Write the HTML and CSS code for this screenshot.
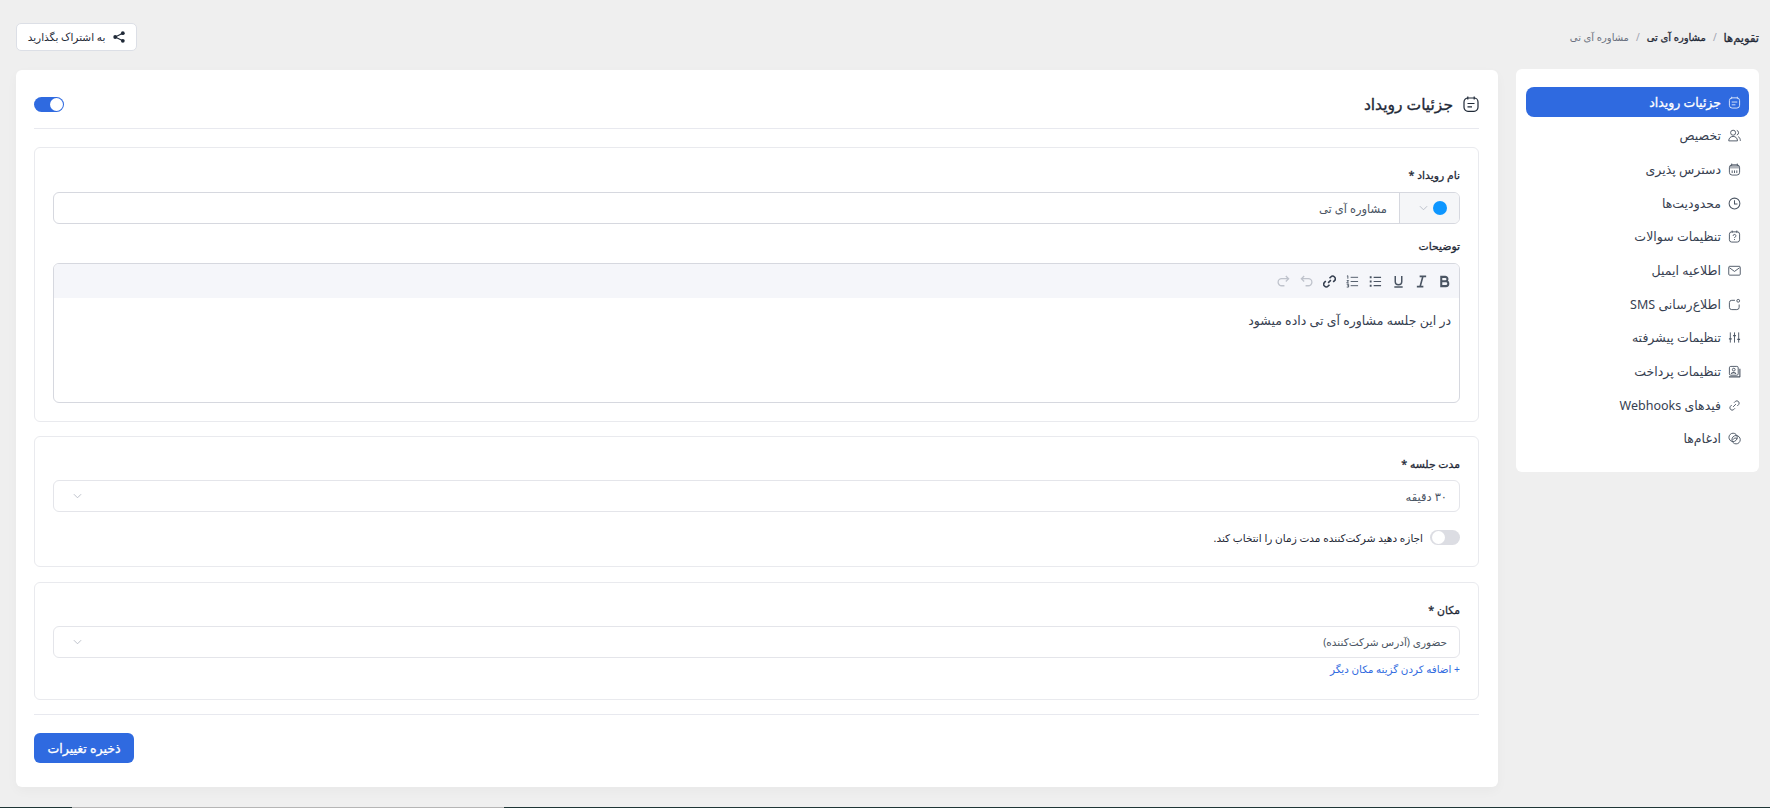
FILE: index.html
```html
<!DOCTYPE html>
<html lang="fa" dir="rtl">
<head>
<meta charset="utf-8">
<title>جزئیات رویداد</title>
<link rel="stylesheet" href="styles.css">
</head>
<body>
<div class="page">
  <header class="topbar">
    <nav class="crumbs">
      <a class="crumb strong first">تقویم‌ها</a><span class="sep">/</span>
      <a class="crumb strong">مشاوره آی تی</a><span class="sep">/</span>
      <span class="crumb muted">مشاوره آی تی</span>
    </nav>
    <button class="share">
      <svg class="ic-share" viewBox="0 0 12 12" fill="#1f2937"><circle cx="9.800" cy="2.200" r="1.900"/><circle cx="2.200" cy="6" r="1.900"/><circle cx="9.800" cy="9.800" r="1.900"/><path d="M2.200 6l7.600-3.800M2.200 6l7.600 3.800" stroke="#1f2937" stroke-width="1.100"/></svg>
      به اشتراک بگذارید
    </button>
  </header>
  <div class="layout">
    <aside class="side">
      <a class="item active"><svg class="ic" viewBox="0 0 14 14" fill="none" stroke="currentColor"><rect x="1.500" y="2" width="11" height="11" rx="3"/><path d="M4 .8v2M10 .8v2M4 6.500h6M4 9.500h4"/></svg>جزئیات رویداد</a>
      <a class="item"><svg class="ic" viewBox="0 0 14 14" fill="none" stroke="currentColor"><circle cx="5.500" cy="4" r="2.700"/><path d="M.8 12.800c0-3 2-4.800 4.700-4.800s4.700 1.800 4.700 4.800zM9.500 1.500a2.600 2.600 0 0 1 0 5M11 8.300c1.400.6 2.300 2.200 2.300 4.500"/></svg>تخصیص</a>
      <a class="item"><svg class="ic" viewBox="0 0 14 14" fill="none" stroke="currentColor"><path d="M1.500 6V5a3 3 0 0 1 3-3h5a3 3 0 0 1 3 3v1z" fill="currentColor" fill-opacity=".45" stroke="none"/><rect x="1.500" y="2" width="11" height="11" rx="3"/><path d="M4 .6v2.400M10 .6v2.400M4.500 8v2.800M7 8v2.800M9.500 8v2.800"/></svg>دسترس پذیری</a>
      <a class="item"><svg class="ic" viewBox="0 0 14 14" fill="none" stroke="currentColor" stroke-width="1.100"><circle cx="7" cy="7" r="5.800"/><path d="M7 3.500V7.500H10.200"/></svg>محدودیت‌ها</a>
      <a class="item"><svg class="ic" viewBox="0 0 14 14" fill="none" stroke="currentColor"><rect x="1.500" y="2" width="11" height="11" rx="2.500"/><path d="M4.500 .6v2.400M9.500 .6v2.400M5.500 6.300a1.500 1.500 0 1 1 2 1.400c-.5.2-.5.5-.5.9M7 9.700v1"/></svg>تنظیمات سوالات</a>
      <a class="item"><svg class="ic" viewBox="0 0 14 14" fill="none" stroke="currentColor"><rect x=".8" y="2.500" width="12.400" height="9.500" rx="1"/><path d="M1.500 4l5.500 4 5.500-4"/></svg>اطلاعیه ایمیل</a>
      <a class="item"><svg class="ic" viewBox="0 0 14 14" fill="none" stroke="currentColor"><path d="M7.500 2.500H4a2.500 2.500 0 0 0-2.500 2.500v5A2.500 2.500 0 0 0 4 12.500h5.500A2.500 2.500 0 0 0 12 10V7"/><circle cx="11" cy="3" r="1.500"/></svg>اطلاع‌رسانی SMS</a>
      <a class="item"><svg class="ic" viewBox="0 0 14 14" fill="none" stroke="currentColor"><path d="M2.500 1.500v11M7 1.500v11M11.500 1.500v11"/><path d="M1 8.500h3M5.500 5h3M10 9h3" stroke-width="1.400"/></svg>تنظیمات پیشرفته</a>
      <a class="item"><svg class="ic" viewBox="0 0 14 14" fill="none" stroke="currentColor"><rect x="1.500" y="1.500" width="9.500" height="9.500" rx="1.500"/><circle cx="6.200" cy="5" r="1.500"/><path d="M3.500 9.500c.5-1.800 4.500-1.800 5 0M1 12.800h12M12.800 4v8.800" stroke-width="1.200"/></svg>تنظیمات پرداخت</a>
      <a class="item"><svg class="ic" viewBox="0 0 14 14" fill="none" stroke="currentColor"><path d="M5.500 8.500l3-3M6.500 4l1.500-1.500a2.500 2.500 0 0 1 3.500 3.500L10 7.500M7.500 10L6 11.500A2.500 2.500 0 0 1 2.500 8L4 6.500"/></svg>فیدهای Webhooks</a>
      <a class="item"><svg class="ic" viewBox="0 0 14 14" fill="none" stroke="currentColor"><circle cx="5.500" cy="5.800" r="4.500"/><circle cx="8.700" cy="8.300" r="4.500"/><path d="M5 8.500c1.500-2 3-2.500 5-1.500"/></svg>ادغام‌ها</a>
    </aside>
    <main class="card">
      <div class="card-head">
        <h1 class="title"><svg class="ic-title" viewBox="0 0 16 16" fill="none" stroke="#1f2937" stroke-width="1.200"><rect x="1" y="2" width="14" height="13.300" rx="4"/><path d="M4.800 .4v3M11.200 .4v3M4.500 7.500h7M4.500 10.800h4.500"/></svg>جزئیات رویداد</h1>
        <span class="toggle on"><i></i></span>
      </div>

      <section class="box box-a">
        <label class="lab">نام رویداد *</label>
        <div class="input-group">
          <div class="addon"><span class="dot"></span><svg class="chev" viewBox="0 0 10 6" fill="none" stroke="#b6bac4"><path d="M1 1l4 4 4-4"/></svg></div>
          <div class="name-val">مشاوره آی تی</div>
        </div>
        <label class="lab lab2">توضیحات</label>
        <div class="editor">
          <div class="tools">
            <svg class="tool" viewBox="0 0 14 14" fill="none" stroke="#4b5563" stroke-width="2.200"><path d="M3.500 2h4.300a2.400 2.400 0 0 1 0 4.800H3.500zM3.500 6.800h5a2.600 2.600 0 0 1 0 5.200h-5zM3.500 1v12"/></svg>
            <svg class="tool" viewBox="0 0 14 14" fill="none" stroke="#4b5563" stroke-width="1.800"><path d="M5 1.500h7M2 12.500h7M8.500 1.500L5.500 12.500"/></svg>
            <svg class="tool" viewBox="0 0 14 14" fill="none" stroke="#4b5563" stroke-width="1.600"><path d="M3.500 1v6a3.500 3.500 0 0 0 7 0V1M2.500 13h9"/></svg>
            <svg class="tool" viewBox="0 0 14 14" fill="none" stroke="#4b5563" stroke-width="1.200"><path d="M5 2.500h8M5 7h8M5 11.500h8"/><path d="M.8 2.500h2M.8 7h2M.8 11.500h2" stroke-width="2.200"/></svg>
            <svg class="tool" viewBox="0 0 14 14" fill="none" stroke="#4b5563" stroke-width="1"><path d="M5 2.500h8M5 7h8M5 11.500h8M1 1.200l1-.4V4M.8 6h2L.8 8.500h2.200M.8 10h2v3h-2M1.500 11.500h1"/></svg>
            <svg class="tool" viewBox="0 0 14 14" fill="none" stroke="#374151" stroke-width="1.700"><path d="M5.500 8.500l3-3M7 3.500l1.400-1.400a2.800 2.800 0 0 1 4 4L11 7.500M7 10.500l-1.400 1.400a2.800 2.800 0 0 1-4-4L3 6.500"/></svg>
            <svg class="tool" viewBox="0 0 14 14" fill="none" stroke="#bfc3cc" stroke-width="1.400"><path d="M4.500 1L1.500 4l3 3M1.500 4H9a3.800 3.800 0 0 1 0 7.600H6"/></svg>
            <svg class="tool" viewBox="0 0 14 14" fill="none" stroke="#bfc3cc" stroke-width="1.400"><path d="M9.500 1l3 3-3 3M12.500 4H5a3.800 3.800 0 0 0 0 7.600h3"/></svg>
          </div>
          <div class="body-text">در این جلسه مشاوره آی تی داده میشود</div>
        </div>
      </section>

      <section class="box box-b">
        <label class="lab">مدت جلسه *</label>
        <div class="select select-big"><span>۳۰ دقیقه</span><svg class="chev" viewBox="0 0 10 6" fill="none" stroke="#b6bac4"><path d="M1 1l4 4 4-4"/></svg></div>
        <div class="allow"><span class="toggle off"><i></i></span><span>اجازه دهید شرکت‌کننده مدت زمان را انتخاب کند.</span></div>
      </section>

      <section class="box box-c">
        <label class="lab">مکان *</label>
        <div class="select"><span>حضوری (آدرس شرکت‌کننده)</span><svg class="chev" viewBox="0 0 10 6" fill="none" stroke="#b6bac4"><path d="M1 1l4 4 4-4"/></svg></div>
        <a class="add">+ اضافه کردن گزینه مکان دیگر</a>
      </section>

      <div class="foot"><button class="save">ذخیره تغییرات</button></div>
    </main>
  </div>
</div>
<div class="strip"><span class="s1"></span><span class="s2"></span><span class="s3"></span></div>
</body>
</html>
```
FILE: styles.css
```css
* { box-sizing: border-box; }
html, body { margin: 0; height: 100%; }
body {
  background: #efefef;
  font-family: "Noto Sans", "DejaVu Sans", "Liberation Sans", sans-serif;
  color: #1f2937;
  font-size: 12px;
  overflow: hidden;
  position: relative;
}
.page { padding: 23px 11px 0 16px; }
.topbar { display: flex; justify-content: space-between; align-items: center; height: 28px; }
.crumbs { display: flex; align-items: center; gap: 7px; font-size: 10px; }
.crumb.strong { color: #1f2937; -webkit-text-stroke: .3px #1f2937; }
.crumb.first { font-size: 11.500px; }
.crumb.muted { color: #6b7280; }
.sep { color: #9ca3af; }
.share {
  display: flex; align-items: center; gap: 8px;
  width: 121px; height: 28px; justify-content: center;
  background: #fff; border: 1px solid #dcdfe6; border-radius: 5px;
  font: inherit; font-size: 10.500px; color: #1f2937; padding: 0;
}
.ic-share { width: 12px; height: 12px; flex: none; }
.layout { display: flex; gap: 18px; margin-top: 18px; align-items: flex-start; }
.side { width: 243px; height: 403px; background: #fff; border-radius: 6px; padding: 18px 10px 0; flex: none; }
.item { display: flex; align-items: center; gap: 7px; height: 30px; padding: 0 8px; font-size: 12.500px; color: #374151; margin-top: 3.700px; }
.item .ic { color: #4b5563; }
.item.active { background: #2f6ae0; color: #fff; -webkit-text-stroke: .3px #fff; border-radius: 8px; margin-top: 0; }
.item.active .ic { color: #fff; opacity: .85; }
.ic { width: 13px; height: 13px; flex: none; }
.card {
  flex: 1; height: 717px; margin-top: 1px; background: #fff; border-radius: 6px; padding: 0 19px 0 18px;
  box-shadow: 0 4px 12px rgba(0,0,0,.03);
}
.card-head { display: flex; justify-content: space-between; align-items: center; height: 59px; margin-bottom: 18px; border-bottom: 1px solid #e8e9ef; padding-top: 10px; }
.title { display: flex; align-items: center; gap: 10px; margin: 0; font-size: 15.500px; font-weight: 400; color: #1f2937; -webkit-text-stroke: .35px #1f2937; }
.ic-title { width: 16px; height: 16px; flex: none; }
.toggle { display: block; width: 30px; height: 15px; border-radius: 8px; position: relative; flex: none; }
.toggle i { position: absolute; top: 1px; width: 13px; height: 13px; border-radius: 50%; background: #fff; }
.toggle.on { background: #2f6ae0; }
.toggle.on i { left: 16px; }
.toggle.off { background: #dcdde3; }
.toggle.off i { left: 2px; }
.box { border: 1px solid #e9eaee; border-radius: 6px; padding: 20px 18px 0; }
.box-a { height: 275px; }
.box-b { height: 131px; margin-top: 14px; }
.box-c { height: 118px; margin-top: 15px; }
.lab { display: block; font-size: 10.800px; color: #1f2937; height: 14px; line-height: 14px; -webkit-text-stroke: .3px #1f2937; }
.lab2 { margin-top: 15px; }
.input-group { display: flex; height: 32px; margin-top: 10px; border: 1px solid #d6d8df; border-radius: 6px; overflow: hidden; }
.addon { width: 60px; flex: none; background: #f5f6f8; border-left: 1px solid #d6d8df; display: flex; align-items: center; padding: 0 12px 0 0; gap: 5px; }
.dot { width: 14px; height: 14px; border-radius: 50%; background: #0d96ff; flex: none; }
.chev { width: 9px; height: 6px; flex: none; }
.name-val { flex: 1; display: flex; align-items: center; padding: 0 12px; font-size: 11.500px; color: #4b5563; }
.editor { margin-top: 10px; height: 140px; border: 1px solid #d6d8df; border-radius: 6px; overflow: hidden; }
.tools { height: 34px; background: #f5f6fa; display: flex; align-items: center; gap: 10px; padding: 0 8px; }
.tool { width: 13px; height: 13px; flex: none; }
.body-text { padding: 14px 8px 0; font-size: 12.500px; color: #374151; }
.select { display: flex; justify-content: space-between; align-items: center; height: 32px; margin-top: 9px; border: 1px solid #e4e5ea; border-radius: 6px; padding: 0 12px 0 19px; font-size: 10.500px; color: #4b5563; }
.select-big { font-size: 11.500px; }
.allow { display: flex; align-items: center; gap: 7px; margin-top: 18px; font-size: 10.500px; color: #1f2937; }
.add { display: block; margin-top: 4px; color: #2f6ae0; font-size: 10.300px; line-height: 14px; }
.foot { margin-top: 14px; border-top: 1px solid #e8e9ef; padding-top: 18px; direction: ltr; }
.save { display: block; width: 100px; height: 30px; background: #2f6ae0; color: #fff; border: 0; border-radius: 6px; font: inherit; -webkit-text-stroke: .3px #fff; font-size: 12.500px; padding: 0; direction: rtl; }
.strip { position: absolute; left: 0; bottom: 0; width: 100%; height: 1px; display: flex; direction: ltr; }
.s1 { width: 72px; background: #1e3535; }
.s2 { width: 432px; background: #b5b5b5; }
.s3 { flex: 1; background: #1e3535; }
```
